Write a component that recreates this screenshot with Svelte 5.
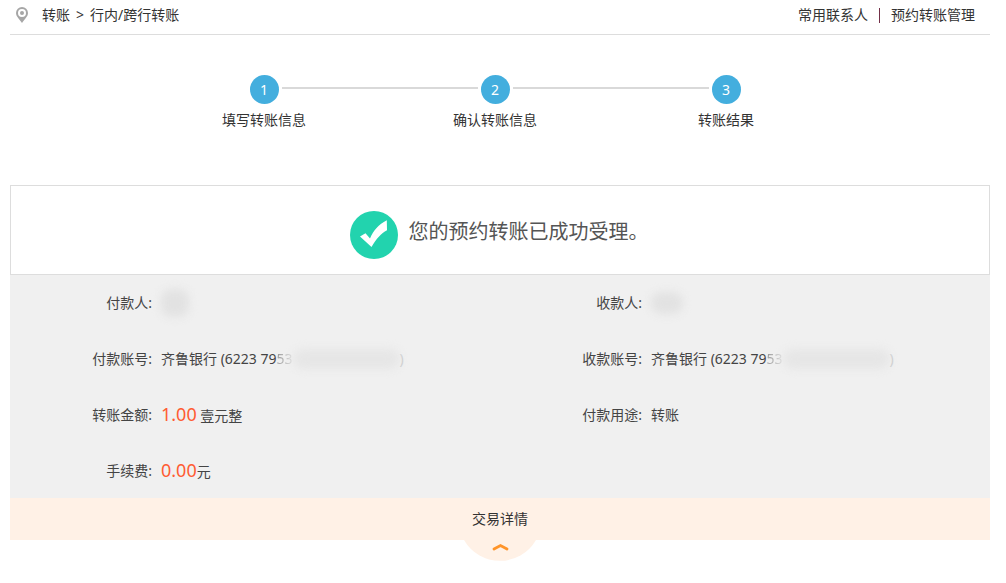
<script>
  let open = $state(true);

  const steps = ['填写转账信息', '确认转账信息', '转账结果'];

  const rows = [
    { label: '付款人', mask: 'payer' },
    { label: '收款人', mask: 'payee' },
    {
      label: '付款账号',
      text: '齐鲁银行 (6223 79',
      faint: '53',
      end: ')',
      mask: 'account'
    },
    {
      label: '收款账号',
      text: '齐鲁银行 (6223 79',
      faint: '53',
      end: ')',
      mask: 'account'
    },
    { label: '转账金额', amount: '1.00', text: ' 壹元整' },
    { label: '付款用途', text: '转账' },
    { label: '手续费', amount: '0.00', text: '元' }
  ];
</script>

<div class="page">
  <header>
    <nav class="crumbs">
      <svg class="pin" viewBox="0 0 12 16" aria-hidden="true">
        <path
          fill="#a6a6a6"
          fill-rule="evenodd"
          d="M6 0a6 6 0 0 0-6 6c0 3.800 3.800 6.300 6 10 2.200-3.700 6-6.200 6-10a6 6 0 0 0-6-6zm0 2a4 4 0 1 1 0 8 4 4 0 0 1 0-8z"
        />
        <circle cx="6" cy="6" r="2" fill="#a6a6a6" />
      </svg>
      <a href="#transfer">转账</a>
      <span>&gt;</span>
      <span>行内/跨行转账</span>
    </nav>
    <nav class="links">
      <a href="#contacts">常用联系人</a>
      <span class="divider"></span>
      <a href="#scheduled">预约转账管理</a>
    </nav>
  </header>

  <ol class="steps">
    {#each steps as step, index}
      <li>
        <div class="track">
          <span class="number">{index + 1}</span>
        </div>
        <div class="step-name">{step}</div>
      </li>
    {/each}
  </ol>

  <section class="result">
    <svg class="tick" viewBox="0 0 48 48" aria-hidden="true">
      <circle cx="24" cy="24" r="24" fill="#22d3ae" />
      <path
        fill="#fff"
        d="M10 25.500L15.500 22.200L20 27.500C23.500 19.500 28.500 13.500 36.800 9.300L37 19.200C31 22.500 26.500 27.500 21.500 36Z"
      />
    </svg>
    <h1>您的预约转账已成功受理。</h1>
  </section>

  {#if open}
    <dl class="details">
      {#each rows as row}
        <div class="row">
          <dt>{row.label}:</dt>
          <dd>
            {#if row.amount}<span class="amount">{row.amount}</span>{/if}{row.text}{#if row.faint}<span class="faint">{row.faint}</span>{/if}{#if row.mask}<span class="mask {row.mask}"></span>{/if}{#if row.end}<span class="faint-end">{row.end}</span>{/if}
          </dd>
        </div>
      {/each}
    </dl>
  {/if}

  <button
    class="toggle"
    type="button"
    aria-expanded={open}
    onclick={() => (open = !open)}
  >
    <span class="toggle-text">交易详情</span>
    <svg class="tab" viewBox="0 0 72 21" aria-hidden="true">
      <path fill="#fff1e6" d="M0 0H72A41.500 41.500 0 0 1 0 0z" />
      <path
        class:closed={!open}
        fill="none"
        stroke="#ff9429"
        stroke-width="2.800"
        stroke-linecap="round"
        d="M30 9L36.500 5.500L43 9"
      />
    </svg>
  </button>
</div>

<style>
  :global(body) {
    margin: 0;
    background: #fff;
  }

  .page {
    padding: 0 16px 0 10px;
    color: #333;
    font-family: 'Noto Sans', 'Noto Sans CJK SC', sans-serif;
    font-size: 14px;
    line-height: 20px;
  }

  header {
    display: flex;
    justify-content: space-between;
    height: 30px;
    padding: 0 15px 4px 6px;
    border-bottom: 1px solid #ddd;
  }

  .crumbs,
  .links {
    display: flex;
    align-items: center;
  }

  .crumbs {
    gap: 6px;
  }

  .links {
    gap: 11px;
  }

  a {
    color: inherit;
    text-decoration: none;
  }

  .pin {
    width: 12px;
    height: 16px;
    margin-right: 8px;
  }

  .divider {
    width: 1px;
    height: 15px;
    background: #733048;
  }

  .steps {
    display: flex;
    justify-content: center;
    margin: 40px 0 55px;
    padding: 0 10px 0 0;
    list-style: none;
  }

  .steps li {
    width: 231px;
    text-align: center;
  }

  .track {
    display: flex;
    align-items: center;
    gap: 3px;
    margin-bottom: 6px;
  }

  .track::before,
  .track::after {
    content: '';
    flex: 1;
    height: 2px;
    margin-bottom: 3px;
    background: #d9d9d9;
  }

  .steps li:first-child .track::before,
  .steps li:last-child .track::after {
    background: none;
  }

  .number {
    width: 29px;
    border-radius: 50%;
    background: #43aede;
    color: #fff;
    line-height: 29px;
  }

  .result {
    display: flex;
    justify-content: center;
    gap: 11px;
    padding: 25px 2px 15px 0;
    border: 1px solid #ddd;
  }

  .tick {
    width: 48px;
    height: 48px;
  }

  h1 {
    margin: 0;
    color: #555;
    font-size: 20px;
    font-weight: normal;
    line-height: 42px;
  }

  .details {
    display: grid;
    grid-template-columns: 1fr 1fr;
    grid-auto-rows: 56px;
    margin: 0 0 -1px;
    background: #f0f0f0;
  }

  .row {
    display: flex;
    align-items: center;
    gap: 9px;
    color: #444;
  }

  dt {
    width: 142px;
    text-align: right;
  }

  dd {
    display: flex;
    align-items: baseline;
    margin: 0;
    white-space: pre;
  }

  .amount {
    color: #ff5c33;
    font-size: 18px;
  }

  .faint {
    background: linear-gradient(90deg, #999, #e0e0e0);
    background-clip: text;
    color: transparent;
  }

  .faint-end {
    color: #ccc;
  }

  .mask {
    align-self: center;
    border-radius: 10px;
    background: #e2e2e2;
    filter: blur(4px);
  }

  .payer {
    width: 28px;
    height: 28px;
  }

  .payee {
    width: 32px;
    height: 22px;
  }

  .account {
    width: 107px;
    height: 20px;
    background: #e6e6e6;
  }

  .toggle {
    display: flex;
    flex-direction: column;
    align-items: center;
    width: 100%;
    padding: 0;
    border: 0;
    background: none;
    color: inherit;
    font: inherit;
    cursor: pointer;
  }

  .toggle-text {
    width: 100%;
    background: #fff1e6;
    line-height: 42px;
  }

  .tab {
    width: 72px;
    height: 21px;
  }

  .closed {
    transform: rotate(180deg);
    transform-origin: 36px 8px;
  }
</style>
